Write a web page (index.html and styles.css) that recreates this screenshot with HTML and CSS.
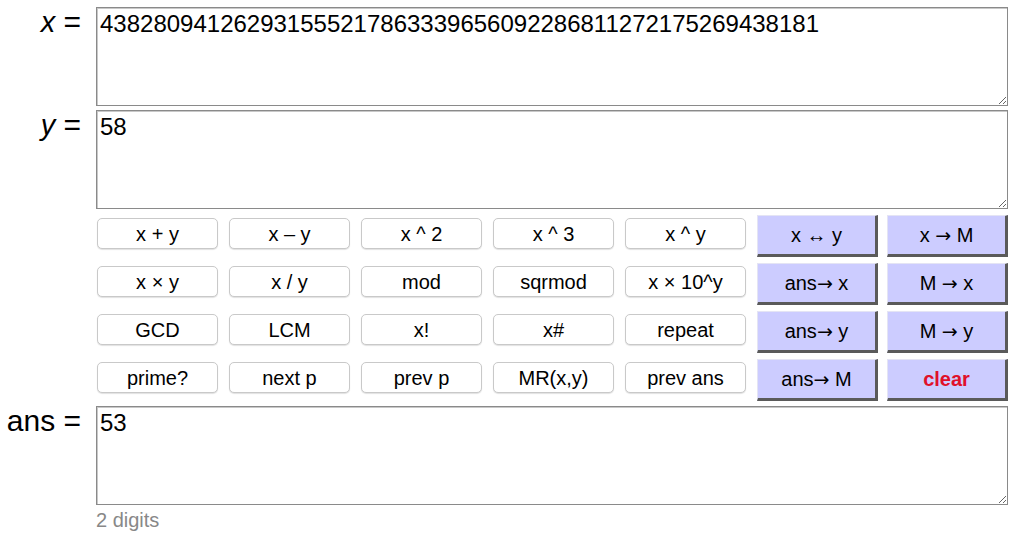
FILE: index.html
```html
<!DOCTYPE html>
<html>
<head>
<meta charset="utf-8">
<link rel="stylesheet" href="styles.css">
</head>
<body>
<div class="calc">
  <div class="label"><i>x</i> =</div>
  <textarea class="field">438280941262931555217863339656092286811272175269438181</textarea>

  <div class="label"><i>y</i> =</div>
  <textarea class="field">58</textarea>

  <div class="spacer"></div>
  <div class="pad">
    <button class="op">x + y</button>
    <button class="op">x – y</button>
    <button class="op">x ^ 2</button>
    <button class="op">x ^ 3</button>
    <button class="op">x ^ y</button>
    <button class="mem">x ↔ y</button>
    <button class="mem">x <span class="arr">→</span> M</button>

    <button class="op">x × y</button>
    <button class="op">x / y</button>
    <button class="op">mod</button>
    <button class="op">sqrmod</button>
    <button class="op">x × 10^y</button>
    <button class="mem">ans<span class="arr">→</span> x</button>
    <button class="mem">M <span class="arr">→</span> x</button>

    <button class="op">GCD</button>
    <button class="op">LCM</button>
    <button class="op">x!</button>
    <button class="op">x#</button>
    <button class="op">repeat</button>
    <button class="mem">ans<span class="arr">→</span> y</button>
    <button class="mem">M <span class="arr">→</span> y</button>

    <button class="op">prime?</button>
    <button class="op">next p</button>
    <button class="op">prev p</button>
    <button class="op">MR(x,y)</button>
    <button class="op">prev ans</button>
    <button class="mem">ans<span class="arr">→</span> M</button>
    <button class="mem clear">clear</button>
  </div>

  <div class="label">ans =</div>
  <textarea class="field">53</textarea>

  <div class="spacer"></div>
  <div class="digits">2 digits</div>
</div>
</body>
</html>
```

FILE: styles.css
```css
html, body {
  margin: 0;
  padding: 0;
  background: #fff;
}

body {
  font-family: "Liberation Sans", Arial, sans-serif;
  color: #000;
}

.calc {
  display: grid;
  grid-template-columns: 96px 912px;
  padding-top: 7px;
  row-gap: 4px;
}

.label {
  font-size: 30px;
  text-align: right;
  padding-right: 15px;
  line-height: 30px;
  white-space: nowrap;
}

.label i {
  font-size: 29px;
}

.field {
  box-sizing: border-box;
  width: 912px;
  height: 99px;
  margin: 0;
  padding: 2px 3px;
  border: 1px solid #8a8a8a;
  box-shadow: inset 1px 1px 0 #c8c8c8;
  font-family: "Liberation Sans", Arial, sans-serif;
  font-size: 24px;
  line-height: 28px;
  color: #000;
  background: #fff;
  resize: vertical;
  overflow: hidden;
}

.pad {
  display: grid;
  grid-template-columns: repeat(5, 132px) 130px 122px;
  grid-auto-rows: 42px;
  row-gap: 6px;
  margin-top: 2px;
  margin-bottom: 1px;
}

.pad button {
  font-family: "Liberation Sans", Arial, sans-serif;
  font-size: 20px;
  color: #000;
  margin: 0 0 0 1px;
  padding: 0;
  cursor: pointer;
}

.arr {
  font-family: "DejaVu Sans", sans-serif;
  font-size: 19px;
}

.op {
  box-sizing: border-box;
  width: 121px;
  height: 31px;
  margin-top: 3px !important;
  align-self: start;
  background: #fff;
  border: 1px solid #c9c9c9;
  border-radius: 5px;
  box-shadow: 0 1px 1px rgba(0, 0, 0, 0.12);
  line-height: 28px;
}

.mem {
  box-sizing: border-box;
  width: 121px;
  height: 42px;
  background: #ccccff;
  border-style: solid;
  border-width: 1px 3px 3px 1px;
  border-color: #e4e4f4 #5a5a5a #5a5a5a #e4e4f4;
  line-height: 36px;
}

.pad .clear {
  color: #e0102a;
  font-weight: bold;
}

.digits {
  color: #888;
  font-size: 20px;
  line-height: 24px;
  margin-top: -1px;
}
```
